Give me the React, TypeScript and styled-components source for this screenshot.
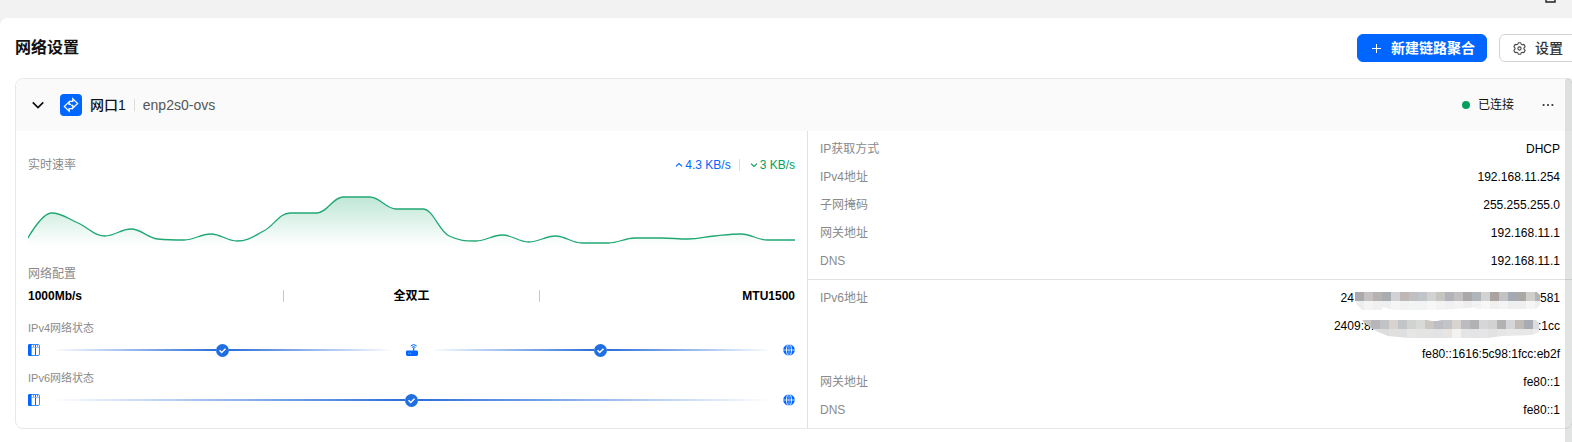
import React from "react";
import styled, { createGlobalStyle } from "styled-components";

const GlobalStyle = createGlobalStyle`
  * { box-sizing: border-box; }
  html, body { margin: 0; }
  body {
    background: #f2f2f2;
    color: #111;
    font-family: "Liberation Sans", "Noto Sans CJK SC", sans-serif;
    font-size: 12px;
    line-height: 20px;
    overflow: hidden;
  }
`;

const Shell = styled.div`
  display: flex;
  flex-direction: column;
  min-height: 100vh;
`;

const WindowBar = styled.div`
  display: flex;
  justify-content: flex-end;
  align-items: flex-start;
  height: 18px;
  padding-right: 16px;
`;

const Panel = styled.main`
  position: relative;
  flex: 1;
  padding: 16px 0 13px 15px;
  background: #fff;
  border-top-left-radius: 8px;
`;

const PanelHeader = styled.header`
  display: flex;
  align-items: center;
  justify-content: space-between;
  margin: 0 -5px 16px 0;
`;

const Title = styled.h1`
  margin: 0;
  font-size: 16px;
  line-height: 28px;
  font-weight: 700;
`;

const Actions = styled.div`
  display: flex;
  gap: 12px;
`;

const Button = styled.button<{ $primary?: boolean }>`
  display: inline-flex;
  align-items: center;
  gap: ${(p) => (p.$primary ? 8 : 9)}px;
  height: 28px;
  padding: 0 ${(p) => (p.$primary ? 11 : 13)}px;
  border: 1px solid ${(p) => (p.$primary ? "#0066ff" : "#d0d3d6")};
  border-radius: 6px;
  background: ${(p) => (p.$primary ? "#0066ff" : "#fff")};
  color: ${(p) => (p.$primary ? "#fff" : "#333")};
  font-family: inherit;
  font-size: 14px;
  line-height: 20px;
  font-weight: ${(p) => (p.$primary ? 700 : 500)};
`;

const Card = styled.section`
  margin-right: -1px;
  border: 1px solid #e6e8ea;
  border-radius: 8px;
  overflow: hidden;
`;

const CardHeader = styled.div`
  display: flex;
  align-items: center;
  height: 52px;
  padding: 0 16px 0 14px;
  background: #fafafa;
`;

const IconButton = styled.button`
  display: inline-flex;
  align-items: center;
  justify-content: center;
  width: 16px;
  height: 16px;
  padding: 0;
  border: 0;
  background: none;
  color: #111;
`;

const PortBadge = styled.span`
  display: inline-flex;
  align-items: center;
  justify-content: center;
  width: 22px;
  height: 22px;
  margin: 0 8px 0 14px;
  border-radius: 4px;
  background: #0066ff;
`;

const PortName = styled.h2`
  margin: 0;
  font-size: 14px;
  font-weight: 500;
`;

const Divider = styled.span<{ $left?: number; $right?: number; $color?: string }>`
  flex: none;
  width: 1px;
  height: 12px;
  margin: 0 ${(p) => p.$right ?? 0}px 0 ${(p) => p.$left ?? 0}px;
  background: ${(p) => p.$color ?? "#dcdcdc"};
`;

const Device = styled.span`
  font-size: 14px;
  color: #555;
`;

const Status = styled.span`
  display: inline-flex;
  align-items: center;
  gap: 8px;
  margin: 0 26px 0 auto;

  &::before {
    content: "";
    width: 8px;
    height: 8px;
    border-radius: 50%;
    background: #049f5e;
  }
`;

const CardBody = styled.div`
  display: grid;
  grid-template-columns: minmax(0, 792fr) minmax(0, 764fr);
`;

const Overview = styled.div`
  padding: 24px 12px 18px;
  border-right: 1px solid #dfe1e3;
`;

const Row = styled.div`
  display: flex;
  align-items: center;
  justify-content: space-between;
`;

const Label = styled.div<{ $small?: boolean }>`
  color: #8a8a8a;
  font-size: ${(p) => (p.$small ? 11 : 12)}px;
`;

const Rates = styled.div`
  display: flex;
  align-items: center;
`;

const Rate = styled.span<{ $color: string }>`
  display: inline-flex;
  align-items: center;
  gap: 2px;
  color: ${(p) => p.$color};
`;

const Chart = styled.svg`
  display: block;
  width: 100%;
  height: 65px;
  margin: 8px 0 16px;
`;

const Specs = styled.div`
  display: flex;
  align-items: center;
  margin: 2px 0 12px;
`;

const Spec = styled.strong<{ $align: string }>`
  flex: 1;
  color: #000;
  text-align: ${(p) => p.$align};
`;

const Link = styled.div`
  display: flex;
  align-items: center;
  gap: 12px;
  height: 20px;
  margin: 2px 0 8px;

  &:last-child { margin-bottom: 0; }
  svg { flex: none; }
`;

const Wire = styled.div`
  flex: 1;
  display: flex;
  align-items: center;

  &::before, &::after {
    content: "";
    flex: 1;
    height: 2px;
    background: linear-gradient(to right, #2b6fdb00, #2b6fdb);
  }
  &::after {
    background: linear-gradient(to left, #2b6fdb00, #2b6fdb);
  }
`;

const Details = styled.dl`
  margin: 0;
  padding: 4px 12px;

  & + & { border-top: 1px solid #dfe1e3; }
`;

const Detail = styled.div`
  display: flex;
  justify-content: space-between;
  line-height: 28px;

  dt { color: #8a8a8a; }
  dd { margin: 0; color: #000; }
`;

const Address = styled.div`
  display: flex;
  justify-content: flex-end;
  height: 28px;
`;

const Mask = styled.svg<{ $overlap?: boolean }>`
  flex: none;
  position: relative;
  margin: 8px ${(p) => (p.$overlap ? -1 : 0)}px 0 ${(p) => (p.$overlap ? -12 : 0)}px;
`;

const ScrollThumb = styled.div`
  position: absolute;
  top: 60px;
  right: 0;
  bottom: 0;
  width: 7px;
  border-radius: 4px 4px 0 0;
  background: rgba(100, 110, 105, 0.19);
`;

/* Throughput samples, measured down from the top of the chart. */
const samples = [
  60, 30, 40, 53, 46, 56, 57, 51, 58, 48, 30, 30, 14, 14, 26, 26, 53, 58, 52,
  59, 53, 60, 60, 55, 55, 56, 53, 51, 57, 57,
];
const CHART_WIDTH = 767;
const CHART_HEIGHT = 65;

const CHART_LEAD = -3;
const CHART_END = 766;
const SMOOTH = 0.4;

const clamp = (v: number, a: number, b: number) =>
  Math.min(Math.max(v, Math.min(a, b)), Math.max(a, b));

function smoothPath(values: number[]) {
  const step = (CHART_END - CHART_LEAD) / (values.length - 1);
  const handle = step * SMOOTH;
  const tangents = values.map((y, i) => {
    if (i === 0 || i === values.length - 1) return 0;
    const slope = ((values[i + 1] - values[i - 1]) / 2) * SMOOTH;
    const after = clamp(y + slope, y, values[i + 1]) - y;
    const before = y - clamp(y - slope, y, values[i - 1]);
    return Math.abs(after) < Math.abs(before) ? after : before;
  });
  return values.reduce((d, y, i) => {
    const x = CHART_LEAD + i * step;
    if (i === 0) return `M${x} ${y}`;
    const from = i === 1 ? x - step : x - step + handle;
    const fromY = values[i - 1] + tangents[i - 1];
    return `${d}C${from} ${fromY} ${x - handle} ${y - tangents[i]} ${x} ${y}`;
  }, "");
}

const line = `${smoothPath(samples)}H${CHART_WIDTH}`;

const SpeedChart = () => (
  <Chart viewBox={`0 0 ${CHART_WIDTH} ${CHART_HEIGHT}`} preserveAspectRatio="none" aria-hidden>
    <defs>
      <linearGradient id="fill" gradientUnits="userSpaceOnUse" x1="0" y1="14" x2="0" y2="63">
        <stop offset="0" stopColor="#14a56c" stopOpacity="0.27" />
        <stop offset="1" stopColor="#14a56c" stopOpacity="0" />
      </linearGradient>
    </defs>
    <path d={`${line}V63H${CHART_LEAD}Z`} fill="url(#fill)" />
    <path d={line} fill="none" stroke="#1fa873" strokeWidth="1.3" vectorEffect="non-scaling-stroke" />
  </Chart>
);

const Chevron = ({ size, up, width = 1.4 }: { size: number; up?: boolean; width?: number }) => (
  <svg width={size} height={size} viewBox="0 0 12 12" fill="none" stroke="currentColor" strokeWidth={width} aria-hidden>
    <path d={up ? "M1.5 8.2L6 3.8l4.5 4.4" : "M1.5 3.8L6 8.2l4.5-4.4"} />
  </svg>
);

const CheckIcon = () => (
  <svg width="13" height="13" viewBox="0 0 13 13" aria-hidden>
    <circle cx="6.5" cy="6.5" r="6.5" fill="#1f6fe0" />
    <path d="M3.5 6.3l2.2 2.2 3.8-3.8" fill="none" stroke="#fff" strokeWidth="1.5" />
  </svg>
);

const NasIcon = () => (
  <svg width="12" height="12" viewBox="0 0 12 12" aria-hidden>
    <rect x="0.5" y="0.5" width="11" height="11" rx="1.5" fill="#fff" stroke="#3d8bff" />
    <path d="M1.5 0H3.6V12H1.5A1.5 1.5 0 0 1 0 10.5V1.5A1.5 1.5 0 0 1 1.5 0Z" fill="#0066ff" />
    <path d="M7.5 1V11" stroke="#0066ff" />
    <path d="M3.5 3.4H11" stroke="#7db2ff" strokeWidth="0.8" />
    <path d="M5.5 1v1.8M9.5 1v1.8" stroke="#5c9dff" />
  </svg>
);

const RouterIcon = () => (
  <svg width="12" height="12" viewBox="0 0 12 12" fill="none" stroke="#0066ff" aria-hidden>
    <rect x="0" y="6.4" width="12" height="5.6" rx="1.4" fill="#0066ff" stroke="none" />
    <path d="M7.7 3.4V7" strokeWidth="1.2" />
    <path d="M4.7 1.9Q7.7-.9 10.7 1.9M5.9 3.4Q7.7 1.8 9.5 3.4" strokeWidth="1" />
    <path d="M2 9.3H3.2M4 9.3H5.2" stroke="#8fbcff" strokeWidth="0.8" />
  </svg>
);

const GlobeIcon = () => (
  <svg width="12" height="12" viewBox="0 0 12 12" aria-hidden>
    <circle cx="6" cy="6" r="5.8" fill="#0066ff" />
    <path d="M0 6H12" stroke="#fff" strokeWidth="0.7" />
    <path d="M6 0V12" stroke="#fff" strokeWidth="0.5" />
    <ellipse cx="6" cy="6" rx="2.5" ry="6.2" fill="none" stroke="#fff" strokeWidth="0.9" />
  </svg>
);

const SwapIcon = () => (
  <svg width="16" height="16" viewBox="0 0 16 16" fill="none" stroke="#fff" strokeWidth="1.3" aria-hidden>
    <path d="M6.6 4.4H9.8V1.7L14.6 6.4L9.8 11.1V8.5H8" />
    <path d="M9.7 11.6H6.2V14.1L1.4 9.4L6.2 4.7V7.3H8" />
  </svg>
);

const GearIcon = () => (
  <svg width="13" height="13" viewBox="0 0 12 12" fill="none" stroke="#444" strokeLinejoin="round" aria-hidden>
    <path d="M4.9.7H7.1Q7.4 2.4 8.3 2.5Q9.3 2.3 10 2.2L11.2 4.2Q10 5.4 10 6Q10 6.6 11.2 7.8L10 9.8Q9.3 9.7 8.3 9.5Q7.4 9.6 7.1 11.3H4.9Q4.6 9.6 3.7 9.5Q2.7 9.7 2 9.8L.8 7.8Q2 6.6 2 6Q2 5.4 .8 4.2L2 2.2Q2.7 2.3 3.7 2.5Q4.6 2.4 4.9.7Z" />
    <circle cx="6" cy="6" r="1.5" />
  </svg>
);

const maskA = [
  ["#a9aaad", "#c5c0c2", "#b5b2b2", "#a9adb0", "#d2d2d5", "#bdb8b5", "#c0c0c2", "#c0c5ca", "#d2d2d0", "#c5c5c2", "#b2b2b8", "#c2bfc0", "#aaa9a8", "#b0b5ba", "#d2d2d2", "#aba3a0", "#c2c2c5", "#a5aab2", "#aaa8a5", "#cfcecb", "#b2b5b8"],
  ["#eceeee", "#f4f4f4", "#f0f0f0", "#eeeff0", "#f6f6f6", "#f2f2f2", "#f3f4f4", "#f2f3f4", "#f7f7f7", "#f3f3f3", "#f0f0f2", "#f3f3f3", "#eeeeee", "#f0f2f3", "#f7f7f7", "#f0f0ee", "#f4f4f4", "#eeeff0", "#efefef", "#f6f6f4", "#eeefef"],
];
const maskB = [
  ["#c6c6c6", "#b6b6b8", "#c2c3c6", "#d8d3cf", "#c2c5c8", "#d2d2d2", "#d8dad8", "#cbc7c3", "#bcbec4", "#c2c4c8", "#d8d3cf", "#bcbcc0", "#b2b2b4", "#d6d6d8", "#d2d2d2", "#b2b2b4", "#d6d6d8", "#c0bcb5", "#a8acb2", "#dcdede"],
  ["#e8e8e8", "#dedede", "#dcdcdc", "#e2e0de", "#dedfe0", "#e6e6e6", "#e4e4e2", "#e4e4e4", "#e2e3e5", "#e8e4e2", "#f4f2f0", "#e4e5e6", "#e4e4e6", "#e6e6e6", "#e2e2e2", "#e6e6e8", "#e8e8e8", "#e6e7e7", "#e8e8e8", "#ececec"],
];

const Mosaic = ({ id, width, rows, clip, overlap }: { id: string; width: number; rows: string[][]; clip: string; overlap?: boolean }) => (
  <Mask width={width} height="18" viewBox={`0 0 ${width} 18`} $overlap={overlap} role="img" aria-label="已隐藏">
    <clipPath id={id}>
      <path d={clip} />
    </clipPath>
    <g clipPath={`url(#${id})`} shapeRendering="crispEdges">
      {rows.map((row, y) =>
        row.map((fill, x) => <rect key={`${y}-${x}`} x={x * 9 + (overlap ? 0 : 1)} y={y * 9} width="9" height="9" fill={fill} />),
      )}
    </g>
  </Mask>
);

const Field = ({ label, children }: { label: string; children: React.ReactNode }) => (
  <Detail>
    <dt>{label}</dt>
    <dd>{children}</dd>
  </Detail>
);

export default function App() {
  return (
    <Shell>
      <GlobalStyle />
      <WindowBar>
        <svg width="11" height="3" viewBox="0 0 11 3" aria-hidden>
          <path d="M1 0V2H10V0" fill="none" stroke="#222" strokeWidth="1.4" />
        </svg>
      </WindowBar>
      <Panel>
        <PanelHeader>
          <Title>网络设置</Title>
          <Actions>
            <Button type="button" $primary>
              <svg width="14" height="14" viewBox="0 0 14 14" stroke="#fff" aria-hidden>
                <path d="M7.5 3V12M3 7.5H12" />
              </svg>
              新建链路聚合
            </Button>
            <Button type="button">
              <GearIcon />
              设置
            </Button>
          </Actions>
        </PanelHeader>
        <Card>
          <CardHeader>
            <IconButton type="button" aria-label="收起">
              <Chevron size={14} width={1.5} />
            </IconButton>
            <PortBadge>
              <SwapIcon />
            </PortBadge>
            <PortName>网口1</PortName>
            <Divider $left={8} $right={8} />
            <Device>enp2s0-ovs</Device>
            <Status>已连接</Status>
            <IconButton type="button" aria-label="更多">
              <svg width="12" height="4" viewBox="0 0 12 4" fill="#333" aria-hidden>
                <circle cx="1.6" cy="2" r="1.1" />
                <circle cx="6" cy="2" r="1.1" />
                <circle cx="10.4" cy="2" r="1.1" />
              </svg>
            </IconButton>
          </CardHeader>
          <CardBody>
            <Overview>
              <Row>
                <Label>实时速率</Label>
                <Rates>
                  <Rate $color="#0066ff">
                    <Chevron size={8} up width={1.7} />
                    4.3 KB/s
                  </Rate>
                  <Divider $left={8} $right={10} />
                  <Rate $color="#049f5e">
                    <Chevron size={8} width={1.7} />
                    3 KB/s
                  </Rate>
                </Rates>
              </Row>
              <SpeedChart />
              <Label>网络配置</Label>
              <Specs>
                <Spec $align="left">1000Mb/s</Spec>
                <Divider $color="#c8c8c8" />
                <Spec $align="center">全双工</Spec>
                <Divider $color="#c8c8c8" />
                <Spec $align="right">MTU1500</Spec>
              </Specs>
              <Label $small>IPv4网络状态</Label>
              <Link>
                <NasIcon />
                <Wire>
                  <CheckIcon />
                </Wire>
                <RouterIcon />
                <Wire>
                  <CheckIcon />
                </Wire>
                <GlobeIcon />
              </Link>
              <Label $small>IPv6网络状态</Label>
              <Link>
                <NasIcon />
                <Wire>
                  <CheckIcon />
                </Wire>
                <GlobeIcon />
              </Link>
            </Overview>
            <div>
              <Details>
                <Field label="IP获取方式">DHCP</Field>
                <Field label="IPv4地址">192.168.11.254</Field>
                <Field label="子网掩码">255.255.255.0</Field>
                <Field label="网关地址">192.168.11.1</Field>
                <Field label="DNS">192.168.11.1</Field>
              </Details>
              <Details>
                <Field label="IPv6地址">
                  <Address>
                    <span>24</span>
                    <Mosaic id="mask-a" width={186} rows={maskA} clip="M1 0H183L186 3V13L182 17H120L126 15L116 16L84 18H40L28 15V18H8L3 13L0 6Z" />
                    <span>581</span>
                  </Address>
                  <Address>
                    <span>2409:8.</span>
                    <Mosaic id="mask-b" overlap width={177} rows={maskB} clip="M0 0H65L70 1H75L80 0H174L177 3V12L170 15L140 16L126 18H46L26 16L14 11L4 4Z" />
                    <span>:1cc</span>
                  </Address>
                  <Address>fe80::1616:5c98:1fcc:eb2f</Address>
                </Field>
                <Field label="网关地址">fe80::1</Field>
                <Field label="DNS">fe80::1</Field>
              </Details>
            </div>
          </CardBody>
        </Card>
        <ScrollThumb />
      </Panel>
    </Shell>
  );
}
